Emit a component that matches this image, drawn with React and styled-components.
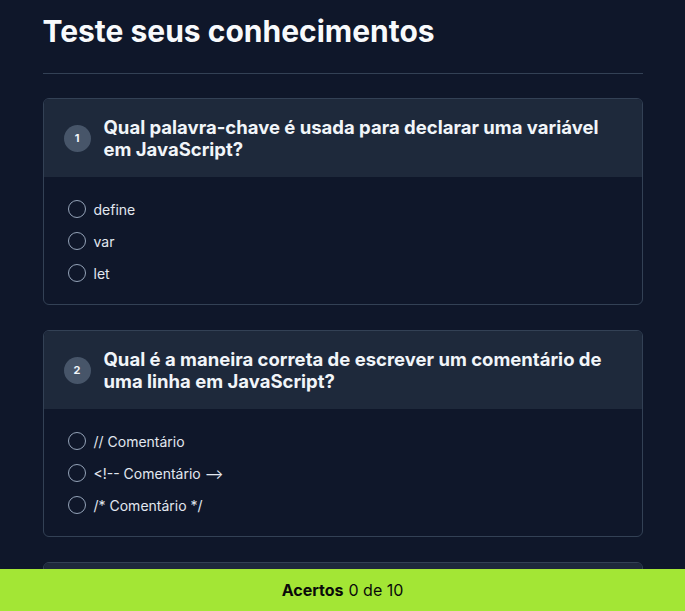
import React, { useState } from "react";
import styled, { createGlobalStyle } from "styled-components";

const GlobalStyle = createGlobalStyle`
* {
  margin: 0;
  padding: 0;
  box-sizing: border-box;
}

body {
  background-color: #0f172a;
  font-family: 'Inter', 'Liberation Sans', sans-serif;
  color: #e2e8f0;
}
`;

const Page = styled.div`
height: 100vh;
overflow: hidden;
`;

const Container = styled.main`
max-width: 600px;
margin: 0 auto;
padding-top: 13px;
padding-bottom: 80px;
`;

const Title = styled.h1`
font-size: 30px;
line-height: 36px;
font-weight: 700;
color: #f8fafc;
`;

const Divider = styled.hr`
border: none;
border-top: 1px solid #334155;
margin: 24px 0;
`;

const Card = styled.section`
border: 1px solid #334155;
border-radius: 6px;
overflow: hidden;
margin-bottom: 25px;
`;

const CardHeader = styled.div`
display: flex;
align-items: center;
gap: 13px;
padding: 17px 20px;
background-color: #1e293b;
`;

const Badge = styled.span`
flex: 0 0 27px;
width: 27px;
height: 27px;
border-radius: 50%;
background-color: #475569;
color: #f1f5f9;
font-size: 11px;
font-weight: 700;
display: flex;
align-items: center;
justify-content: center;
`;

const Question = styled.h2`
font-size: 18.5px;
line-height: 22px;
font-weight: 700;
color: #f1f5f9;
`;

const Options = styled.div`
padding: 16px 24px 15px;
display: flex;
flex-direction: column;
`;

const Option = styled.label`
display: flex;
align-items: center;
gap: 8px;
height: 32px;
font-size: 14px;
color: #e2e8f0;
cursor: pointer;
`;

const Radio = styled.span`
width: 18px;
height: 18px;
border-radius: 50%;
border: 1.5px solid ${(p) => (p.$checked ? "#a3e635" : "#94a3b8")};
display: flex;
align-items: center;
justify-content: center;
&::after {
  content: "";
  width: 8px;
  height: 8px;
  border-radius: 50%;
  background: ${(p) => (p.$checked ? "#a3e635" : "transparent")};
}
`;

const Footer = styled.footer`
position: fixed;
left: 0;
right: 0;
bottom: 0;
height: 42px;
background-color: #a3e635;
color: #0a0a0a;
font-size: 16px;
display: flex;
align-items: center;
justify-content: center;
gap: 5px;
`;

const Strong = styled.strong`
font-weight: 700;
`;

const questions = [
  {
    q: "Qual palavra-chave é usada para declarar uma variável em JavaScript?",
    options: ["define", "var", "let"],
  },
  {
    q: "Qual é a maneira correta de escrever um comentário de uma linha em JavaScript?",
    options: ["// Comentário", "<!-- Comentário -->", "/* Comentário */"],
  },
  {
    q: "Qual método converte uma string JSON em um objeto?",
    options: ["JSON.parse()", "JSON.stringify()", "JSON.toObject()"],
  },
];

const App = () => {
  const [answers, setAnswers] = useState({});

  return (
    <>
      <GlobalStyle />
      <Page>
        <Container>
          <Title>Teste seus conhecimentos</Title>
          <Divider />
          {questions.map((item, i) => (
            <Card key={i}>
              <CardHeader>
                <Badge>{i + 1}</Badge>
                <Question>{item.q}</Question>
              </CardHeader>
              <Options>
                {item.options.map((opt, j) => (
                  <Option key={j} onClick={() => setAnswers({ ...answers, [i]: j })}>
                    <Radio $checked={answers[i] === j} />
                    {opt}
                  </Option>
                ))}
              </Options>
            </Card>
          ))}
        </Container>
        <Footer>
          <Strong>Acertos</Strong> 0 de 10
        </Footer>
      </Page>
    </>
  );
};

export default App;
